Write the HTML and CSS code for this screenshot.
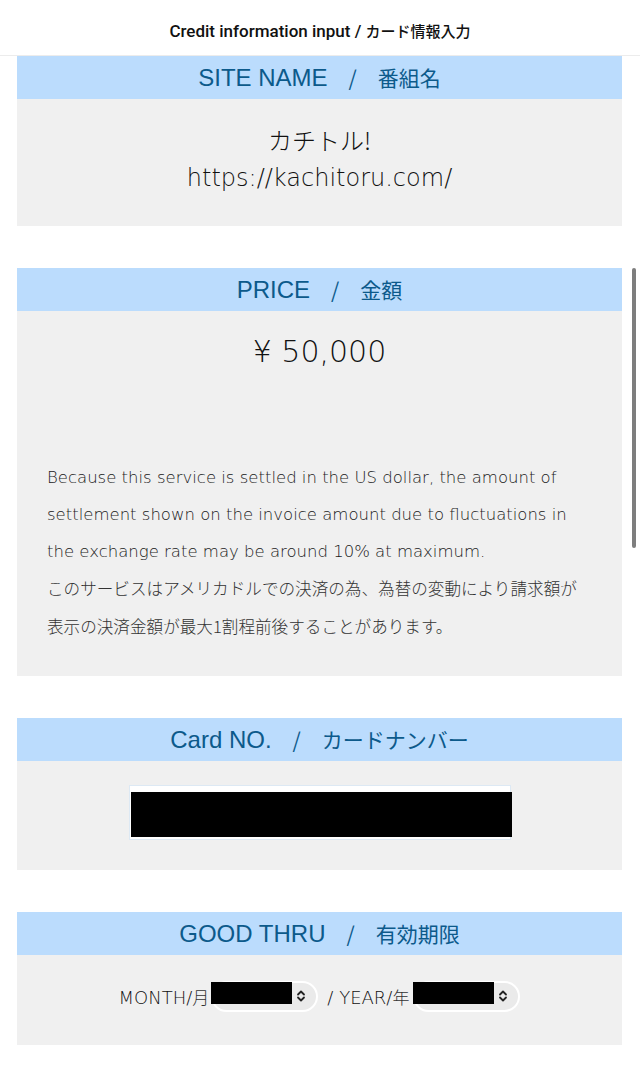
FILE: index.html
```html
<!DOCTYPE html>
<html lang="ja">
<head>
    <meta charset="UTF-8">
    <meta name="viewport" content="width=device-width, initial-scale=1.0">
    <title>Credit information input</title>
    <link rel="stylesheet" href="styles.css">
</head>
<body>
    <div class="topbar">
        <h1>Credit information input / <span class="ja">カード情報入力</span></h1>
    </div>

    <div class="box">
        <h2 class="box-title">SITE NAME<span class="ja">　/　番組名</span></h2>
        <div class="box-body site">
            <p class="ja">カチトル!</p>
            <p>https://kachitoru.com/</p>
        </div>
    </div>

    <div class="box">
        <h2 class="box-title">PRICE<span class="ja">　/　金額</span></h2>
        <div class="box-body price">
            <p class="amount">¥ 50,000</p>
            <p class="note">Because this service is settled in the US dollar, the amount of settlement shown on the invoice amount due to fluctuations in the exchange rate may be around 10% at maximum.<br><span class="ja">このサービスはアメリカドルでの決済の為、為替の変動により請求額が表示の決済金額が最大1割程前後することがあります。</span></p>
        </div>
    </div>

    <div class="box">
        <h2 class="box-title">Card NO.<span class="ja">　/　カードナンバー</span></h2>
        <div class="box-body card">
            <div class="card-input">
                <span class="hidden-value"></span>
            </div>
        </div>
    </div>

    <div class="box">
        <h2 class="box-title">GOOD THRU<span class="ja">　/　有効期限</span></h2>
        <div class="box-body thru">
            <span>MONTH/<span class="ja">月</span></span>
            <div class="select">
                <span class="hidden-value"></span>
                <svg width="10" height="14" viewBox="0 0 10 14"><path d="M2 5.5 5 2.5 8 5.5M2 8.5 5 11.5 8 8.5" fill="none" stroke="#222" stroke-width="1.8" stroke-linecap="round" stroke-linejoin="round"/></svg>
            </div>
            <span class="sep">/ YEAR/<span class="ja">年</span></span>
            <div class="select">
                <span class="hidden-value"></span>
                <svg width="10" height="14" viewBox="0 0 10 14"><path d="M2 5.5 5 2.5 8 5.5M2 8.5 5 11.5 8 8.5" fill="none" stroke="#222" stroke-width="1.8" stroke-linecap="round" stroke-linejoin="round"/></svg>
            </div>
        </div>
    </div>

    <div class="scroll-thumb"></div>
</body>
</html>
```

FILE: styles.css
```css
* {
box-sizing: border-box;
}

body {
margin: 0;
background: #fff;
font-family: "DejaVu Sans", "Noto Sans CJK JP", sans-serif;
color: #111;
}

.ja {
font-family: "Noto Sans CJK JP", sans-serif;
}

.topbar {
height: 56px;
border-bottom: 1px solid #ececec;
display: flex;
align-items: center;
justify-content: center;
padding-top: 6px;
}

.topbar h1 {
margin: 0;
font-family: Roboto, "Noto Sans CJK JP", sans-serif;
font-size: 17px;
font-weight: 500;
color: #111;
}

.topbar h1 .ja {
font-size: 15px;
}

.box {
margin: 0 18px 42px 17px;
}

.box-title {
margin: 0;
height: 43px;
line-height: 43px;
background: #bbdcfd;
color: #0c5a8b;
font-family: "Liberation Sans", "Noto Sans CJK JP", sans-serif;
font-size: 24px;
font-weight: 400;
text-align: center;
}

.box-title .ja {
font-size: 21px;
}

.box-body {
background: #f0f0f0;
}

.site {
padding: 22px 0 29px;
text-align: center;
font-size: 24px;
font-weight: 300;
line-height: 38px;
}

.site p {
margin: 0;
}

.price {
padding: 21px 0 30px;
}

.amount {
margin: 0 0 87px;
text-align: center;
font-size: 30px;
font-weight: 300;
line-height: 40px;
}

.note {
margin: 0;
padding: 0 30px;
font-size: 16.5px;
font-weight: 300;
line-height: 37px;
color: #1a1a1a;
}

.note .ja {
font-size: 16.6px;
color: #333;
}

.card {
padding: 24px 0 30px;
display: flex;
justify-content: center;
}

.card-input {
width: 382px;
height: 55px;
background: #fff;
border: 1px solid #dde9f4;
padding: 6px 0 0 1px;
}

.card-input .hidden-value {
display: block;
width: 381px;
height: 45px;
background: #000;
}

.thru {
height: 90px;
padding-bottom: 8px;
display: flex;
align-items: center;
justify-content: center;
font-size: 18px;
font-weight: 300;
color: #111;
}

.thru .ja {
font-size: 17px;
color: #333;
}

.thru .sep {
margin: 0 2px 0 9px;
}

.select {
position: relative;
width: 107px;
height: 31px;
margin-left: 2px;
border: 2px solid #fff;
border-radius: 16px;
background: #eaeaea;
display: flex;
align-items: center;
justify-content: flex-end;
padding-right: 10px;
}

.select .hidden-value {
position: absolute;
left: -2px;
top: -1px;
width: 81px;
height: 22px;
background: #000;
}

.scroll-thumb {
position: fixed;
top: 268px;
right: 4px;
width: 4px;
height: 280px;
border-radius: 2px;
background: #7e7e7e;
}
```
